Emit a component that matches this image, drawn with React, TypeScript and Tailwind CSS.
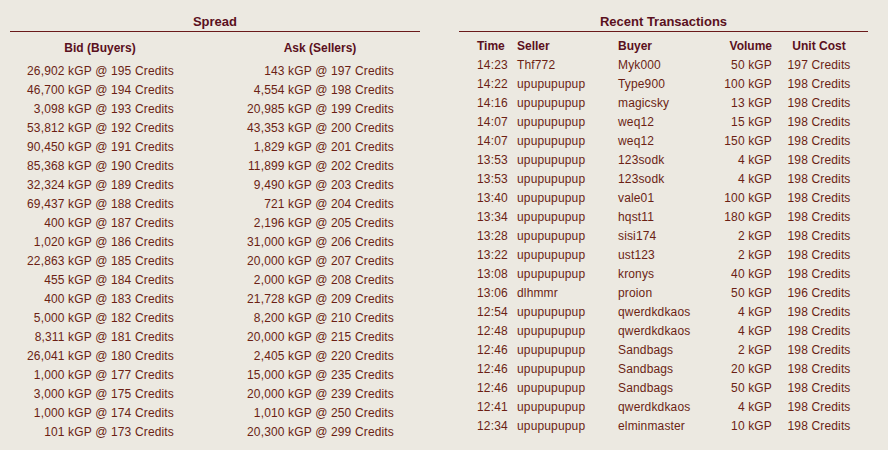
import React from "react";

const bids = [
  ["26,902", "195"], ["46,700", "194"], ["3,098", "193"], ["53,812", "192"], ["90,450", "191"],
  ["85,368", "190"], ["32,324", "189"], ["69,437", "188"], ["400", "187"], ["1,020", "186"],
  ["22,863", "185"], ["455", "184"], ["400", "183"], ["5,000", "182"], ["8,311", "181"],
  ["26,041", "180"], ["1,000", "177"], ["3,000", "175"], ["1,000", "174"], ["101", "173"],
];
const asks = [
  ["143", "197"], ["4,554", "198"], ["20,985", "199"], ["43,353", "200"], ["1,829", "201"],
  ["11,899", "202"], ["9,490", "203"], ["721", "204"], ["2,196", "205"], ["31,000", "206"],
  ["20,000", "207"], ["2,000", "208"], ["21,728", "209"], ["8,200", "210"], ["20,000", "215"],
  ["2,405", "220"], ["15,000", "235"], ["20,000", "239"], ["1,010", "250"], ["20,300", "299"],
];
const tx = [
  ["14:23", "Thf772", "Myk000", "50", "197"],
  ["14:22", "upupupupup", "Type900", "100", "198"],
  ["14:16", "upupupupup", "magicsky", "13", "198"],
  ["14:07", "upupupupup", "weq12", "15", "198"],
  ["14:07", "upupupupup", "weq12", "150", "198"],
  ["13:53", "upupupupup", "123sodk", "4", "198"],
  ["13:53", "upupupupup", "123sodk", "4", "198"],
  ["13:40", "upupupupup", "vale01", "100", "198"],
  ["13:34", "upupupupup", "hqst11", "180", "198"],
  ["13:28", "upupupupup", "sisi174", "2", "198"],
  ["13:22", "upupupupup", "ust123", "2", "198"],
  ["13:08", "upupupupup", "kronys", "40", "198"],
  ["13:06", "dlhmmr", "proion", "50", "196"],
  ["12:54", "upupupupup", "qwerdkdkaos", "4", "198"],
  ["12:48", "upupupupup", "qwerdkdkaos", "4", "198"],
  ["12:46", "upupupupup", "Sandbags", "2", "198"],
  ["12:46", "upupupupup", "Sandbags", "20", "198"],
  ["12:46", "upupupupup", "Sandbags", "50", "198"],
  ["12:41", "upupupupup", "qwerdkdkaos", "4", "198"],
  ["12:34", "upupupupup", "elminmaster", "10", "198"],
];

export default function App() {
  return (
    <div
      className="w-[888px] h-[450px] bg-[#ece9e1] text-[#6b1f14] flex pl-[10px] gap-[39px] overflow-hidden"
      style={{ fontFamily: '"Liberation Sans", Arial, sans-serif' }}
    >
      <div className="w-[410px] flex flex-col pt-[14px]">
        <div className="text-center text-[13px] leading-[16px] font-bold text-[#5a1020] pb-[1px] border-b border-[#6a1a1a]">
          Spread
        </div>
        <div className="grid grid-cols-[180px_180px] gap-x-[40px] mt-[7px] text-[12px] leading-[19px]">
          <div className="text-center font-bold text-[#5a1020]">Bid (Buyers)</div>
          <div className="text-center font-bold text-[#5a1020]">Ask (Sellers)</div>
        </div>
        <div className="grid grid-cols-[180px_180px] gap-x-[40px] mt-[4px] text-[12px] leading-[19px] tracking-[0.15px]">
          <div className="flex flex-col pr-[16px] text-right">
            {bids.map((b, i) => (
              <div key={i}>{b[0]} kGP @ {b[1]} Credits</div>
            ))}
          </div>
          <div className="flex flex-col pr-[16px] text-right">
            {asks.map((a, i) => (
              <div key={i}>{a[0]} kGP @ {a[1]} Credits</div>
            ))}
          </div>
        </div>
      </div>
      <div className="w-[409px] flex flex-col pt-[14px]">
        <div className="text-center text-[13px] leading-[16px] font-bold text-[#5a1020] pb-[1px] border-b border-[#6a1a1a]">
          Recent Transactions
        </div>
        <div className="mt-[5px] pl-[18px] text-[12px] leading-[19px]">
          <div className="grid grid-cols-[40px_101px_82px_72px_94px] font-bold text-[#5a1020]">
            <div>Time</div>
            <div>Seller</div>
            <div>Buyer</div>
            <div className="text-right">Volume</div>
            <div className="text-center">Unit Cost</div>
          </div>
          {tx.map((t, i) => (
            <div key={i} className="grid grid-cols-[40px_101px_82px_72px_94px] tracking-[0.15px]">
              <div>{t[0]}</div>
              <div>{t[1]}</div>
              <div>{t[2]}</div>
              <div className="text-right">{t[3]} kGP</div>
              <div className="text-center">{t[4]} Credits</div>
            </div>
          ))}
        </div>
      </div>
    </div>
  );
}
